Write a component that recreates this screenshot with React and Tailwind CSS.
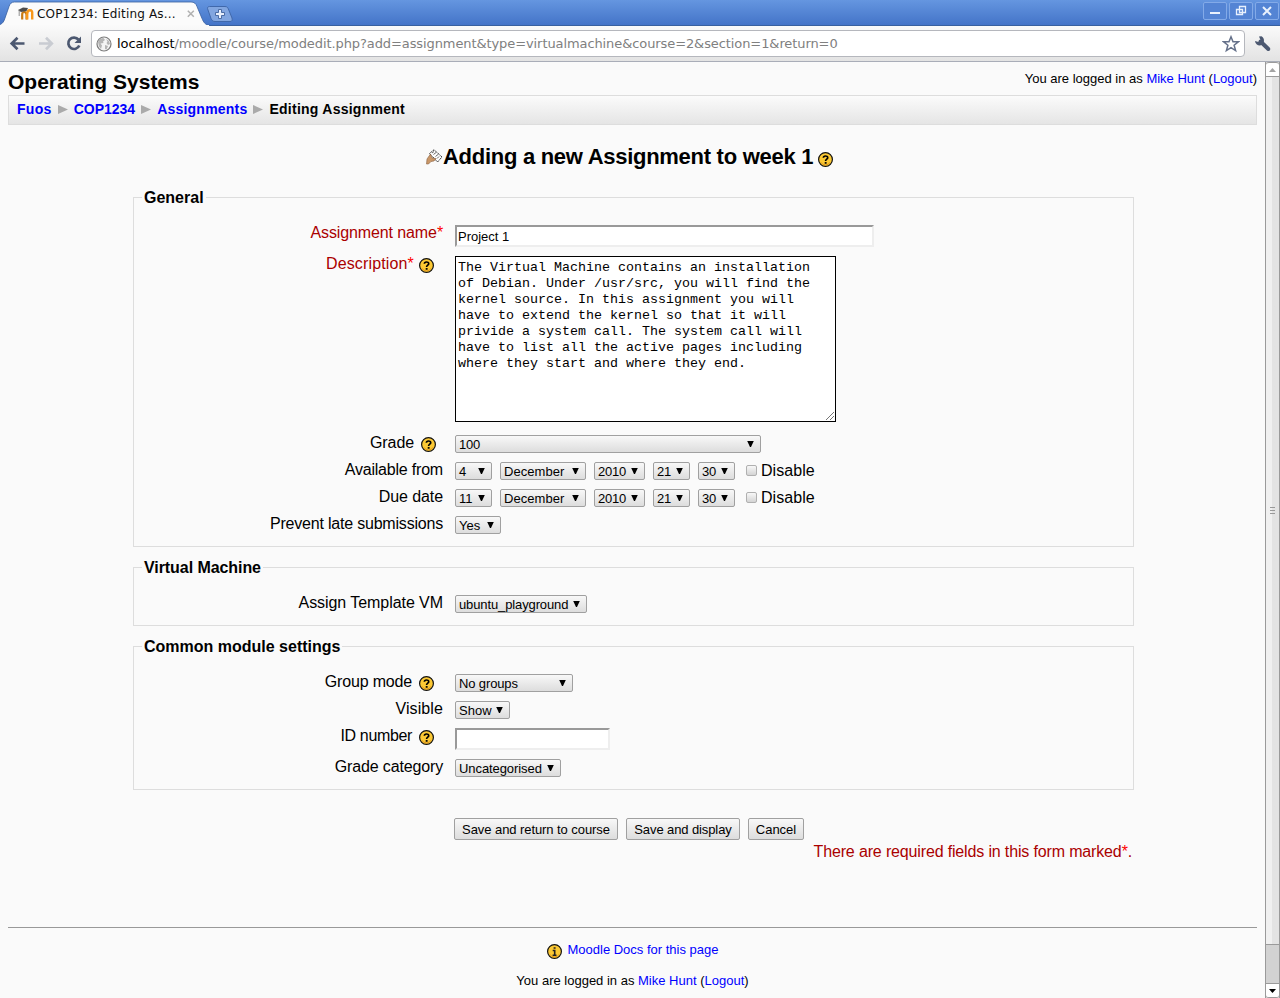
import React from "react";

const ui = "font-['Liberation_Sans',sans-serif]";

function HelpIcon({ glyph = "?", className = "" }) {
  return (
    <svg width="16" height="16" viewBox="0 0 16 16" className={`shrink-0 ${className}`}>
      <circle cx="7.5" cy="7.500" r="6.900" fill="#fcc934" stroke="#111" strokeWidth="1.200" />
      <path d="M2.800 10.200a5.400 5.400 0 0 0 9.400 0" fill="none" stroke="#e39a1c" strokeWidth="1" />
      {glyph === "?" ? (
        <g fill="none" stroke="#000" strokeWidth="1.700">
          <path d="M5.400 5.800C5.400 3.400 9.700 3.400 9.700 5.700C9.700 7.300 7.600 7 7.600 9" />
          <path d="M6.700 10.900h1.900" />
        </g>
      ) : (
        <g fill="none" stroke="#222" strokeWidth="1.600">
          <path d="M6.600 4h2M5.700 6.500h2v4.600M5.600 11.200h3.900" />
        </g>
      )}
    </svg>
  );
}

function Select({ children, className = "" }) {
  return (
    <div className={`flex h-[18px] items-center justify-between rounded-[2px] border border-[#a0a0a0] bg-linear-to-b from-[#f8f8f8] to-[#dddddd] pr-[6px] pl-[3px] text-[13px] leading-[16px] whitespace-nowrap text-black ${className}`}>
      <span className="pt-px">{children}</span>
      <svg width="7" height="6" viewBox="0 0 7 6" className="mb-px shrink-0"><path d="M0.200 0h6.600L4 6H3z" fill="#000" /></svg>
    </div>
  );
}

function Row({ label, required, help, helpClass = "mr-[8px] ml-[7px]", labelClass = "", children, className = "" }) {
  return (
    <div className={`flex items-start ${className}`}>
      <div className={`-mt-px flex h-[18px] w-[309px] shrink-0 justify-end text-[16px] leading-[18px] whitespace-nowrap ${required ? "text-[#aa0000]" : "text-black"} ${labelClass}`}>
        <span>{label}{required && <span className="text-[#ff0000]">*</span>}</span>
        {help && <HelpIcon className={`mt-[3px] ${helpClass}`} />}
      </div>
      <div className="ml-[12px] flex items-start">{children}</div>
    </div>
  );
}

function Group({ title, titleClass = "", children }) {
  return (
    <fieldset className="mb-[10px] w-[1001px] border border-[#dddddd] pb-[12px]">
      <legend className={`ml-[8px] h-[20px] px-[2px] text-[16px] leading-[22px] font-bold ${titleClass}`}>{title}</legend>
      <div className="pt-[18px]">{children}</div>
    </fieldset>
  );
}

function DateRow({ label, day, labelClass }) {
  return (
    <Row label={label} className="mt-[9px]" labelClass={labelClass}>
      <Select className="w-[37px]">{day}</Select>
      <Select className="ml-[8px] w-[86px] tracking-[0.05px]">December</Select>
      <Select className="ml-[8px] w-[51px] tracking-[-0.2px]">2010</Select>
      <Select className="ml-[8px] w-[37px] tracking-[-0.2px]">21</Select>
      <Select className="ml-[8px] w-[37px] tracking-[-0.2px]">30</Select>
      <span className="mt-[3px] ml-[11px] h-[11px] w-[11px] rounded-[2px] border border-[#b0b0b0] bg-linear-to-b from-[#f8f8f8] to-[#d4d4d4]" />
      <span className="ml-[4px] text-[16px] leading-[18px] tracking-[0.05px]">Disable</span>
    </Row>
  );
}

function Button({ children, className }) {
  return (
    <button type="button" className={`h-[22px] rounded-[2px] border border-[#a0a0a0] bg-linear-to-b from-[#f8f8f8] to-[#dddddd] pt-px text-center text-[13px] leading-[20px] whitespace-nowrap text-black ${className}`}>{children}</button>
  );
}

function LoginInfo({ className }) {
  return (
    <div className={`text-[13px] leading-[16px] whitespace-nowrap ${className}`}>
      You are logged in as <a className="text-[#0000ff]">Mike Hunt</a> (<a className="text-[#0000ff]">Logout</a>)
    </div>
  );
}

function WindowButton({ children }) {
  return (
    <div className="flex h-[18px] w-[24px] items-center justify-center rounded-[2px] border border-[#83aae8] bg-[#5484d4]">
      <svg width="14" height="14" viewBox="0 0 14 14" fill="none" stroke="#e9f1fd" strokeWidth="2">{children}</svg>
    </div>
  );
}

function TabStrip() {
  return (
    <div className="flex h-[26px] items-start border-b border-[#38609f] bg-linear-to-b from-[#6596e0] to-[#4474c8]">
      <div className="relative h-[26px] w-[210px]">
        <svg width="240" height="26" viewBox="0 0 240 26" className="absolute top-0 left-0">
          <path d="M0 26V24.500C3 23.500 4 21 5 18L9 6.500C10 3.500 11.500 2 14.500 2H191C194 2 196 3.500 197 6.500L202 18.500C203.500 22 205 25 210 25.500V26z" fill="#fbfbfb" stroke="#38609f" strokeWidth="0.800" />
          <path d="M0 25.500H209" stroke="#fafafa" />
          <path d="M209.500 6.500H225C227.500 6.500 228 8 228.800 10L232 18C232.500 20 232 21.500 230 21.500H215C213 21.500 212 20.500 211 18.500L208 10C207 8 207.500 6.500 209.500 6.500z" fill="#82a6e0" stroke="#4068ab" />
          <path d="M218.500 9.500h3v3h3v3h-3v3h-3v-3h-3v-3h3z" fill="#e8effb" stroke="#4b6ca5" strokeWidth="1" />
        </svg>
        <div className="relative flex h-[26px] items-center pt-px pl-[18px]">
          <svg width="17" height="14" viewBox="0 0 17 14" className="shrink-0">
            <path d="M4.200 12.500V7.500Q4.200 5 6.200 5T8.500 7.500V12.500" fill="none" stroke="#c77a14" strokeWidth="2.200" />
            <path d="M9.200 12.500V7Q9.200 3.300 11.900 3.300T14.200 7V12.500" fill="none" stroke="#f7971a" strokeWidth="2.400" />
            <path d="M0 3L5 0.500l5 0.500L8.500 4 3 5z" fill="#4c4c4c" />
            <path d="M1.200 3v6" stroke="#777" strokeWidth="0.800" />
          </svg>
          <span className="ml-[2px] w-[147px] font-['DejaVu_Sans',sans-serif] text-[12px] leading-[16px] tracking-[0.170px] whitespace-nowrap text-[#111]">COP1234: Editing As...</span>
          <svg width="8" height="8" viewBox="0 0 8 8" className="ml-[3px] shrink-0"><path d="M0.800 0.800l6 6M6.800 0.800l-6 6" stroke="#b0b0b0" strokeWidth="1.500" /></svg>
        </div>
      </div>
      <div className="mt-[2px] mr-px ml-auto flex gap-[2px]">
        <WindowButton><path d="M2 9h10" /></WindowButton>
        <WindowButton><path d="M5.500 2.500h6v6h-6zM2.500 5.500h6v5h-6z" strokeWidth="1.300" /></WindowButton>
        <WindowButton><path d="M3 3l8 8M11 3l-8 8" /></WindowButton>
      </div>
    </div>
  );
}

function Toolbar() {
  return (
    <div className="flex h-[36px] items-center border-b border-[#a9adb8] bg-linear-to-b from-[#fafafa] to-[#e3e3e3]">
      <svg width="82" height="20" viewBox="0 0 82 20" className="ml-[9px] shrink-0" fill="none" strokeWidth="2.700">
        <path d="M15.500 9.500H3M8.500 3.700L2.700 9.500 8.500 15.300" stroke="#4c5870" />
        <path d="M30 9.500H42M37 3.700L42.800 9.500 37 15.300" stroke="#c9ccd2" />
        <path d="M69.500 5.700A5.700 5.700 0 1 0 70.300 11.500" stroke="#4c5870" />
        <path d="M72 2.500v6.500h-6.500z" fill="#4c5870" />
      </svg>
      <div className="flex h-[27px] w-[1154px] items-center rounded-[4px] border border-[#b5b7bd] bg-white">
        <svg width="16" height="16" viewBox="0 0 16 16" className="ml-[4px] shrink-0">
          <circle cx="8" cy="8" r="7" fill="#f4f4f4" stroke="#7c7c7c" strokeWidth="1.200" />
          <path d="M2 6C3 3.500 5 2 7.500 2L9 4 7 5.500 7.500 7 4.500 7.500 6 9.500 5 13 3 10.500zM10 3l3 2 1 3-2 1-1.500-2 1-1.500zM9 9l3 1-1.500 3.500L9 13z" fill="#b5b5b5" />
        </svg>
        <span className="ml-[5px] font-['DejaVu_Sans',sans-serif] text-[13px] leading-[18px] tracking-[-0.090px] whitespace-nowrap text-[#808080]"><span className="text-black">localhost</span>/moodle/course/modedit.php?add=assignment&amp;type=virtualmachine&amp;course=2&amp;section=1&amp;return=0</span>
        <svg width="18" height="18" viewBox="0 0 18 18" className="mr-[4px] ml-auto shrink-0"><path d="M9 1.800l2 5h5.300l-4.200 3.400 1.500 5.400L9 12.600l-4.600 3 1.500-5.400L1.700 6.800H7z" fill="#fff" stroke="#65718a" strokeWidth="1.500" /></svg>
      </div>
      <svg width="18" height="18" viewBox="0 0 18 18" className="ml-[9px] shrink-0">
        <path d="M6.500 6.500L14.300 14" stroke="#4c5870" strokeWidth="4" strokeLinecap="round" />
        <path d="M5 1.500L7.500 1.300A5 5 0 0 1 6 10.500 4.800 4.800 0 0 1 1 6L4.500 7 6.500 5z" fill="#4c5870" />
      </svg>
    </div>
  );
}

function Scrollbar() {
  return (
    <div className="flex w-[15px] shrink-0 flex-col border-x border-[#9a9a9a] bg-[#d2d2d2]">
      <div className="flex h-[15px] items-center justify-center rounded-t-[3px] border-y border-[#9a9a9a] bg-white">
        <svg width="7" height="4" viewBox="0 0 7 4"><path d="M0 4L3.500 0 7 4z" fill="#a3a3a3" /></svg>
      </div>
      <div className="flex h-[868px] items-center justify-center border-b border-[#9a9a9a] bg-linear-to-r from-[#f0f0f0] from-50% to-[#e3e3e3] to-50%">
        <div className="flex flex-col gap-[2px]">
          <div className="h-px w-[5px] bg-[#999]" /><div className="h-px w-[5px] bg-[#999]" /><div className="h-px w-[5px] bg-[#999]" />
        </div>
      </div>
      <div className="mt-auto flex h-[15px] items-center justify-center rounded-b-[3px] border-y border-[#9a9a9a] bg-white">
        <svg width="7" height="4" viewBox="0 0 7 4"><path d="M0 0h7L3.500 4z" fill="#000" /></svg>
      </div>
    </div>
  );
}

function Breadcrumbs() {
  const arrow = <svg width="10" height="9" viewBox="0 0 10 9" className="mx-[6px]"><path d="M0 0l10 4.500-10 4.500z" fill="#aaaaaa" /></svg>;
  return (
    <nav className="mx-[8px] flex h-[30px] items-center border border-[#dddddd] bg-linear-to-b from-[#fbfbfb] to-[#e5e5e5] pb-[2px] pl-[8px] text-[14px] leading-[18px] font-bold whitespace-nowrap text-[#0000ff]">
      <a className="tracking-[0.300px]">Fuos</a>{arrow}<a>COP1234</a>{arrow}<a className="tracking-[0.220px]">Assignments</a>{arrow}
      <span className="tracking-[0.250px] text-black">Editing Assignment</span>
    </nav>
  );
}

function AssignmentForm() {
  return (
    <form className="ml-[133px] w-[1001px]">
      <Group title="General">
        <Row label="Assignment name" required labelClass="tracking-[-0.110px]">
          <div className="h-[22px] w-[419px] border-2 border-t-[#999] border-r-[#eee] border-b-[#eee] border-l-[#999] bg-white pl-px text-[13px] leading-[19px]">Project 1</div>
        </Row>
        <Row label="Description" required help helpClass="mr-[8px] ml-[5px]" labelClass="tracking-[0.150px]" className="mt-[9px]">
          <div className="relative h-[166px] w-[381px] border border-black bg-white pt-[3px] pl-[2px] font-['Liberation_Mono',monospace] text-[13.333px] leading-[16px] whitespace-pre">
            {"The Virtual Machine contains an installation\nof Debian. Under /usr/src, you will find the\nkernel source. In this assignment you will\nhave to extend the kernel so that it will\nprivide a system call. The system call will\nhave to list all the active pages including\nwhere they start and where they end."}
            <svg width="8" height="8" viewBox="0 0 8 8" className="absolute right-px bottom-px"><path d="M0 8l8-8M4 8l4-4" stroke="#666" strokeWidth="0.900" /></svg>
          </div>
        </Row>
        <Row label="Grade" help helpClass="mr-[6px] ml-[7px]" className="mt-[13px]" labelClass="tracking-[-0.100px]"><Select className="w-[306px] tracking-[-0.200px]">100</Select></Row>
        <DateRow label="Available from" day="4" labelClass="tracking-[-0.200px]" />
        <DateRow label="Due date" day="11" labelClass="tracking-[-0.080px]" />
        <Row label="Prevent late submissions" className="mt-[9px]" labelClass="tracking-[-0.200px]"><Select className="w-[46px]">Yes</Select></Row>
      </Group>
      <Group title="Virtual Machine" titleClass="tracking-[-0.070px]">
        <Row label="Assign Template VM" labelClass="tracking-[-0.060px]"><Select className="w-[132px] tracking-[-0.120px]">ubuntu_playground</Select></Row>
      </Group>
      <Group title="Common module settings">
        <Row label="Group mode" help labelClass="tracking-[-0.180px]"><Select className="w-[118px] tracking-[-0.130px]">No groups</Select></Row>
        <Row label="Visible" className="mt-[9px]" labelClass="tracking-[0.100px]"><Select className="w-[55px]">Show</Select></Row>
        <Row label="ID number" help className="mt-[9px]" labelClass="tracking-[-0.350px]">
          <div className="h-[22px] w-[155px] border-2 border-t-[#999] border-r-[#eee] border-b-[#eee] border-l-[#999] bg-white" />
        </Row>
        <Row label="Grade category" className="mt-[9px]" labelClass="tracking-[-0.150px]"><Select className="w-[106px] tracking-[-0.080px]">Uncategorised</Select></Row>
      </Group>
      <div className="mt-[28px] ml-[321px] flex gap-[8px]">
        <Button className="w-[164px] tracking-[-0.070px]">Save and return to course</Button>
        <Button className="w-[114px] tracking-[-0.100px]">Save and display</Button>
        <Button className="w-[56px]">Cancel</Button>
      </div>
      <div className="mt-[3px] mr-[2px] text-right text-[16px] leading-[18px] tracking-[-0.150px] text-[#aa0000]">There are required fields in this form marked<span className="text-[#ff0000]">*</span>.</div>
    </form>
  );
}

export default function App() {
  return (
    <div className={`flex h-[998px] w-[1280px] flex-col overflow-hidden bg-[#fafafa] text-black ${ui}`}>
      <TabStrip />
      <Toolbar />
      <div className="flex h-[936px]">
        <main className="w-[1265px]">
          <header className="flex h-[33px] justify-between pr-[8px] pl-[8px]">
            <h1 className="pt-[8px] text-[21px] leading-[24px] font-bold whitespace-nowrap">Operating Systems</h1>
            <LoginInfo className="pt-[9px]" />
          </header>
          <Breadcrumbs />
          <div className="mt-[18px] flex h-[28px] items-center pl-[426px]">
            <svg width="17" height="16" viewBox="0 0 17 16" className="shrink-0">
              <path d="M3.500 4.500L8 0.800 16 8 11.500 13z" fill="#fff" stroke="#222" strokeDasharray="1.500 0.700" />
              <path d="M6 4l2-1.500M7.500 5.500l2.500-2M9.500 7.500l2.500-2M11 9.500l2-2" stroke="#555" strokeWidth="0.900" />
              <path d="M1 10l3.500-5 1.500 4 4 0.500L8 12l-3 .500-2.500 2.500H0.500z" fill="#c99768" stroke="#8a6242" strokeWidth="0.600" />
            </svg>
            <h2 className="text-[22px] leading-[28px] font-bold tracking-[-0.280px] whitespace-nowrap">Adding a new Assignment to week 1</h2>
            <HelpIcon className="mt-[6px] ml-[5px]" />
          </div>
          <div className="h-[16px]" />
          <AssignmentForm />
          <footer className="mx-[8px] mt-[66px] border-t border-[#999]">
            <div className="mt-[14px] flex items-start justify-center pl-px text-[13px] leading-[16px]">
              <HelpIcon glyph="i" className="mt-[2px] mr-[4px]" />
              <a className="text-[#0000ff]">Moodle Docs for this page</a>
            </div>
            <LoginInfo className="mt-[13px] text-center" />
          </footer>
        </main>
        <Scrollbar />
      </div>
    </div>
  );
}
